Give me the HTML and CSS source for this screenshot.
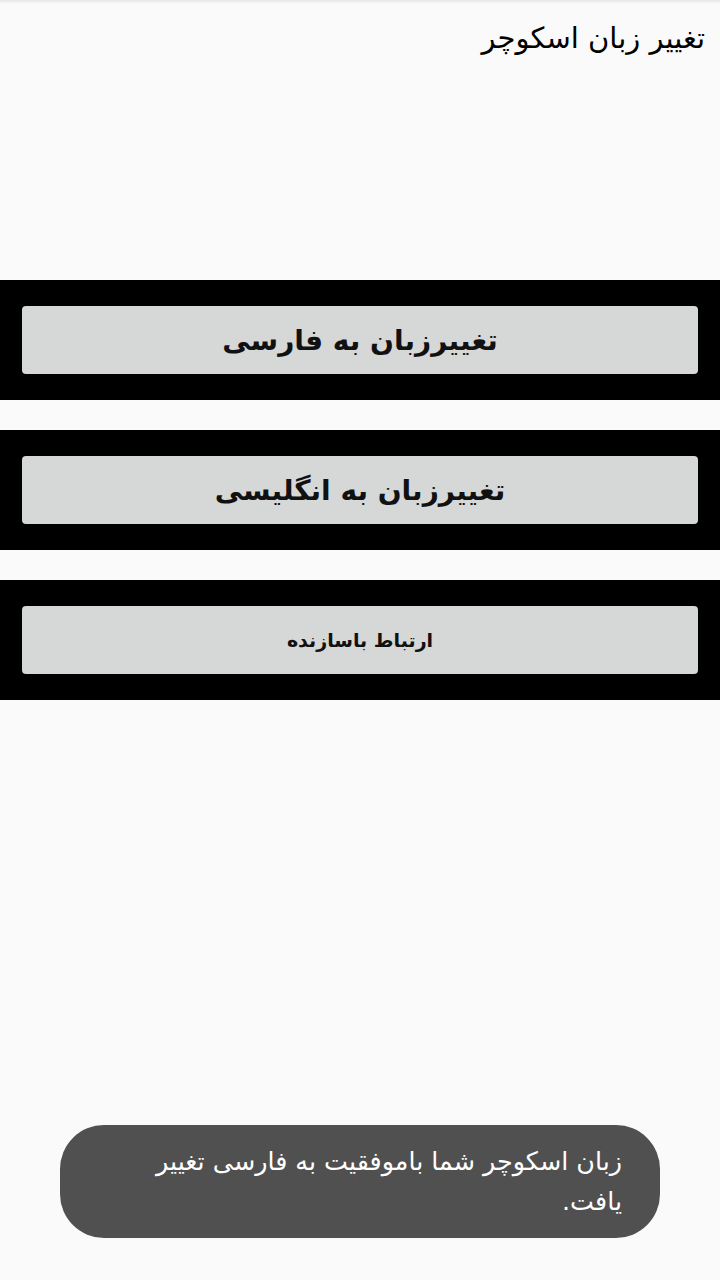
FILE: index.html
```html
<!DOCTYPE html>
<html lang="fa" dir="rtl">
<head>
  <meta charset="UTF-8">
  <meta name="viewport" content="width=device-width, initial-scale=1.0">
  <title>تغییر زبان اسکوچر</title>
  <link rel="stylesheet" href="styles.css">
</head>
<body>
  <div id="wrap">
    <div class="titleBar">تغییر زبان اسکوچر</div>
    <div class="menu">
      <div class="band"><button class="btn big">تغییرزبان به فارسی</button></div>
      <div class="band"><button class="btn big">تغییرزبان به انگلیسی</button></div>
      <div class="band"><button class="btn small">ارتباط باسازنده</button></div>
    </div>
    <div class="toast">
      <p>زبان اسکوچر شما باموفقیت به فارسی تغییر یافت.</p>
    </div>
  </div><!--//wrap-->
</body>
</html>
```

FILE: styles.css
```css
* {margin:0; padding:0; box-sizing:border-box;}
html, body {height:100%;}
body {background:#fafafa; font-family:"DejaVu Sans", "Noto Sans", sans-serif; color:#000;}

#wrap {position:relative; height:1280px; overflow:hidden;}
#wrap:before {content:''; position:absolute; top:0; left:0; right:0; height:4px; background:linear-gradient(#e6e6e6, #fafafa);}

.titleBar {height:280px; padding:18px 15px 0 0; font-size:29px; line-height:40px; text-align:right;}

.menu {display:flex; flex-direction:column; gap:30px;}
.band {background:#000; padding:26px 22px;}
.btn {display:block; width:100%; height:68px; background:#d6d7d7; border:0 none; border-radius:4px; font-family:inherit; color:#111; font-weight:bold; cursor:pointer;}
.btn.big {font-size:28px;}
.btn.small {font-size:19px;}

.toast {position:absolute; left:60px; right:60px; top:1125px; height:113px; padding:16px 38px 0 38px; background:#505050; border-radius:44px; color:#fff; font-size:25.4px; line-height:40px; text-align:right;}
```
